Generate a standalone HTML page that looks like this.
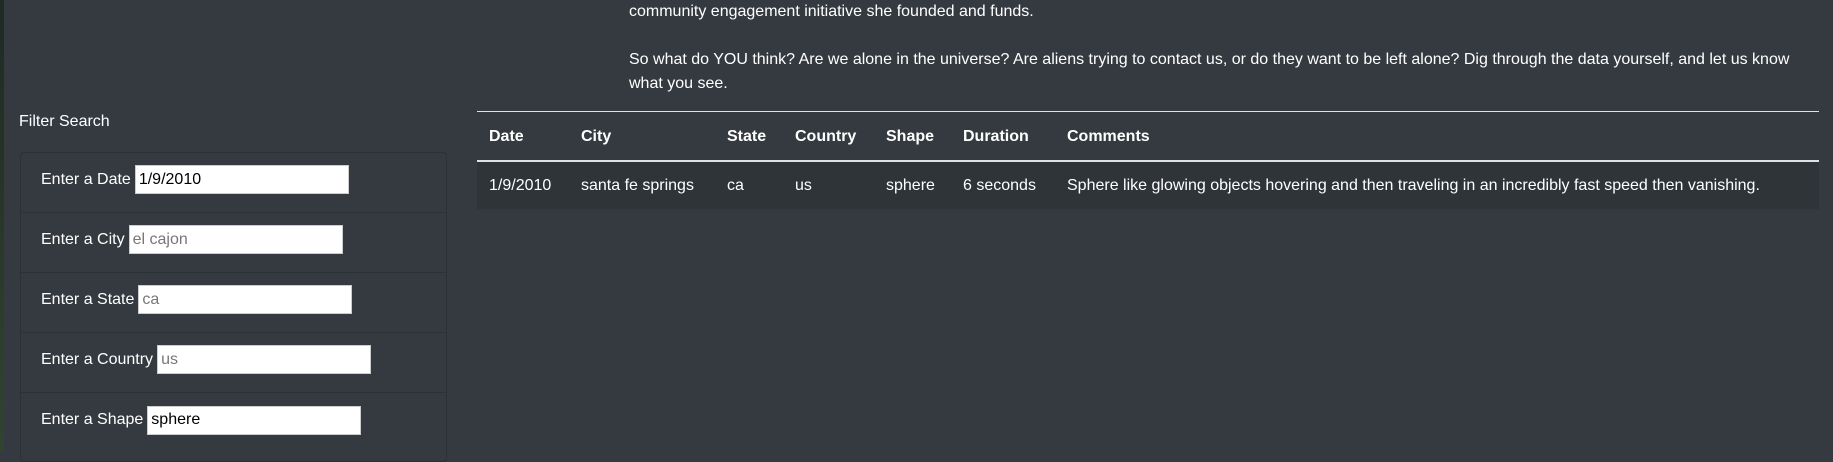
<!DOCTYPE html>
<html><head><meta charset="utf-8"><style>
*{box-sizing:border-box;margin:0;padding:0}
body{width:1833px;height:452px;overflow:hidden;background:#343a40;font-family:"Liberation Sans",Arial,sans-serif;color:#fff;font-size:16px;position:relative}
.strip{position:absolute;left:0;top:0;width:4px;height:452px;background:linear-gradient(#1e2a22,#2a3a2a 60%,#314430)}
.fs{position:absolute;left:19px;top:112px;font-size:16px;line-height:20px}
.panel{position:absolute;left:20px;top:152px;width:427px;height:310px;border:1px solid #2c3137;border-radius:4px}
.row{height:60px;border-bottom:1px solid #2c3137;display:flex;align-items:center;padding-left:20px;padding-bottom:6px}
.row span{margin-right:4px}
.row input{height:29px;border:1px solid #ccc;font:16px "Liberation Sans",Arial,sans-serif;padding:0 3px;color:#000;background:#fff}
.row input::placeholder{color:#777}
.p{position:absolute;left:629px;width:1190px;line-height:24px}
table{position:absolute;left:477px;top:111px;width:1342px;border-collapse:collapse}
th{text-align:left;font-weight:bold;height:49px;padding:2px 12px 0;border-top:1px solid #dee2e6;border-bottom:2px solid #dee2e6}
td{height:48px;padding:2px 12px 0;background:#2f3439}
</style></head><body>
<div class="strip"></div>
<div class="p" style="top:0px">community engagement initiative she founded and funds.</div>
<div class="p" style="top:48px">So what do YOU think? Are we alone in the universe? Are aliens trying to contact us, or do they want to be left alone? Dig through the data yourself, and let us know what you see.</div>
<div class="fs">Filter Search</div>
<div class="panel">
<div class="row"><span>Enter a Date</span><input style="width:214px" value="1/9/2010"></div>
<div class="row"><span>Enter a City</span><input style="width:214px" placeholder="el cajon"></div>
<div class="row"><span>Enter a State</span><input style="width:214px" placeholder="ca"></div>
<div class="row"><span>Enter a Country</span><input style="width:214px" placeholder="us"></div>
<div class="row" style="border-bottom:none"><span>Enter a Shape</span><input style="width:214px" value="sphere"></div>
</div>
<table>
<tr><th style="width:92px">Date</th><th style="width:146px">City</th><th style="width:68px">State</th><th style="width:91px">Country</th><th style="width:77px">Shape</th><th style="width:104px">Duration</th><th>Comments</th></tr>
<tr><td>1/9/2010</td><td>santa fe springs</td><td>ca</td><td>us</td><td>sphere</td><td>6 seconds</td><td>Sphere like glowing objects hovering and then traveling in an incredibly fast speed then vanishing.</td></tr>
</table>
</body></html>
